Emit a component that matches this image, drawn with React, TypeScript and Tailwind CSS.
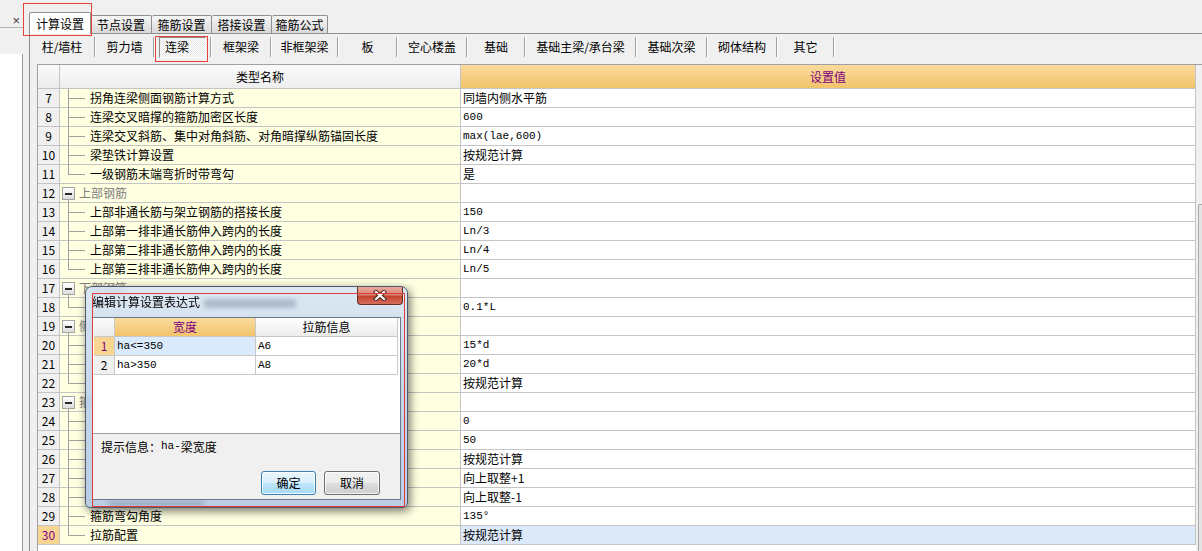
import React from 'react';

type T = 'mid' | 'last' | 'group';
interface Row {
  n: number;
  name: string;
  value?: string;
  t: T;
  sel?: boolean;
}

const rows: Row[] = [
  { n: 7, name: '拐角连梁侧面钢筋计算方式', value: '同墙内侧水平筋', t: 'mid' },
  { n: 8, name: '连梁交叉暗撑的箍筋加密区长度', value: '600', t: 'mid' },
  { n: 9, name: '连梁交叉斜筋、集中对角斜筋、对角暗撑纵筋锚固长度', value: 'max(lae,600)', t: 'mid' },
  { n: 10, name: '梁垫铁计算设置', value: '按规范计算', t: 'mid' },
  { n: 11, name: '一级钢筋末端弯折时带弯勾', value: '是', t: 'last' },
  { n: 12, name: '上部钢筋', t: 'group' },
  { n: 13, name: '上部非通长筋与架立钢筋的搭接长度', value: '150', t: 'mid' },
  { n: 14, name: '上部第一排非通长筋伸入跨内的长度', value: 'Ln/3', t: 'mid' },
  { n: 15, name: '上部第二排非通长筋伸入跨内的长度', value: 'Ln/4', t: 'mid' },
  { n: 16, name: '上部第三排非通长筋伸入跨内的长度', value: 'Ln/5', t: 'last' },
  { n: 17, name: '下部钢筋', t: 'group' },
  { n: 18, name: '', value: '0.1*L', t: 'last' },
  { n: 19, name: '侧面钢筋', t: 'group' },
  { n: 20, name: '', value: '15*d', t: 'mid' },
  { n: 21, name: '', value: '20*d', t: 'mid' },
  { n: 22, name: '', value: '按规范计算', t: 'last' },
  { n: 23, name: '箍筋/拉筋', t: 'group' },
  { n: 24, name: '', value: '0', t: 'mid' },
  { n: 25, name: '', value: '50', t: 'mid' },
  { n: 26, name: '', value: '按规范计算', t: 'mid' },
  { n: 27, name: '', value: '向上取整+1', t: 'mid' },
  { n: 28, name: '', value: '向上取整-1', t: 'mid' },
  { n: 29, name: '箍筋弯勾角度', value: '135°', t: 'mid' },
  { n: 30, name: '拉筋配置', value: '按规范计算', t: 'last', sel: true },
];

const isLatin = (s: string) => /^[\x20-\x7E°]+$/.test(s);

const subTabs: { label: string; w: string; pressed?: boolean }[] = [
  { label: '柱/墙柱', w: 'w-[64px]' },
  { label: '剪力墙', w: 'w-[57px]' },
  { label: '连梁', w: 'w-[55px]', pressed: true },
  { label: '框架梁', w: 'w-[58px]' },
  { label: '非框架梁', w: 'w-[65px]' },
  { label: '板', w: 'w-[57px]' },
  { label: '空心楼盖', w: 'w-[68px]' },
  { label: '基础', w: 'w-[56px]' },
  { label: '基础主梁/承台梁', w: 'w-[109px]' },
  { label: '基础次梁', w: 'w-[69px]' },
  { label: '砌体结构', w: 'w-[68px]' },
  { label: '其它', w: 'w-[55px]' },
];

function ValueText({ v }: { v: string }) {
  if (isLatin(v)) {
    return <span className="font-['Liberation_Mono',monospace] text-[11px] leading-[18px]">{v}</span>;
  }
  return <span className="leading-[18px]">{v}</span>;
}

function NameCell({ r }: { r: Row }) {
  if (r.t === 'group') {
    return (
      <div className="relative w-[401px] h-[19px] shrink-0 bg-[#ffffe1] border-b border-r border-[#c4c4c4] flex items-center pl-[19px]">
        <div className="absolute left-[8px] top-[15px] -bottom-px w-px bg-[#a0a0a0]" />
        <div className="absolute left-[2px] top-[3px] w-[13px] h-[13px] border border-[#a4a4a4] bg-[linear-gradient(180deg,#ffffff,#dcdcdc)] flex items-center justify-center">
          <div className="w-[7px] h-[2px] bg-[#2a2a2a]" />
        </div>
        <span className="leading-[18px] text-[#808080]">{r.name}</span>
      </div>
    );
  }
  return (
    <div className="relative w-[401px] h-[19px] shrink-0 bg-[#ffffe1] border-b border-r border-[#c4c4c4] flex items-center pl-[30px]">
      {r.t === 'last' ? (
        <div className="absolute left-[8px] top-0 h-[10px] w-px bg-[#a0a0a0]" />
      ) : (
        <div className="absolute left-[8px] top-0 -bottom-px w-px bg-[#a0a0a0]" />
      )}
      <div className="absolute left-[8px] top-[9px] w-[17px] h-px bg-[#a0a0a0]" />
      {r.name ? <span className="leading-[18px] whitespace-nowrap">{r.name}</span> : null}
    </div>
  );
}

function CloseX() {
  return (
    <svg width="14" height="11" viewBox="0 0 14 11">
      <path d="M3 2 L11 9 M11 2 L3 9" stroke="#4a2420" strokeWidth="4.2" strokeLinecap="square" />
      <path d="M3 2 L11 9 M11 2 L3 9" stroke="#ffffff" strokeWidth="2.2" strokeLinecap="square" />
    </svg>
  );
}

function Dialog() {
  return (
    <div className="absolute z-30 left-[85px] top-[286px] w-[323px] h-[222px] rounded-t-[7px] rounded-b-[5px] border border-[#4d596a] bg-[linear-gradient(180deg,rgba(214,229,246,0.86),rgba(190,210,235,0.88)_45%,rgba(178,200,228,0.9))] backdrop-blur-[2px] shadow-[2px_3px_10px_rgba(0,0,0,0.55)] flex flex-col">
      <div className="absolute left-[118px] top-[12px] w-[92px] h-[9px] rounded-[3px] bg-[#5d6f85]/35 blur-[2px]" />
      <div className="absolute left-[22px] bottom-[1px] w-[96px] h-[5px] rounded-[3px] bg-[#5d6f85]/35 blur-[2px]" />
      <div className="relative h-[30px] flex items-center pl-[6px] text-[12px] text-black">编辑计算设置表达式</div>
      <div className="relative mx-[6px] h-[183px] border border-[#6c7887] bg-[#f0f0f0] flex flex-col">
        <div className="h-[116px] bg-white border-b border-[#a0a0a0] flex flex-col pl-px">
          <div className="flex h-[19px]">
            <div className="w-[21px] h-[19px] border-r border-b border-[#c8c8c8] bg-[linear-gradient(180deg,#fafafa,#ececec)]" />
            <div className="w-[141px] h-[19px] border-r border-b border-[#c8c8c8] bg-[linear-gradient(180deg,#fadb9c,#f2c46c)] flex items-center justify-center text-[#800080] leading-[18px]">宽度</div>
            <div className="w-[142px] h-[19px] border-r border-b border-[#c8c8c8] bg-[linear-gradient(180deg,#ffffff,#ececec)] flex items-center justify-center leading-[18px]">拉筋信息</div>
          </div>
          <div className="flex h-[19px]">
            <div className="w-[21px] h-[19px] border-r border-b border-[#c8c8c8] bg-[#f9d592] flex items-center justify-center text-[#800080] leading-[18px]">1</div>
            <div className="w-[141px] h-[19px] border-r border-b border-[#c8c8c8] bg-[#dcebfc] flex items-center pl-[2px]">
              <span className="font-['Liberation_Mono',monospace] text-[11px] leading-[18px]">ha&lt;=350</span>
            </div>
            <div className="w-[142px] h-[19px] border-r border-b border-[#c8c8c8] flex items-center pl-[2px]">
              <span className="font-['Liberation_Mono',monospace] text-[11px] leading-[18px]">A6</span>
            </div>
          </div>
          <div className="flex h-[19px]">
            <div className="w-[21px] h-[19px] border-r border-b border-[#c8c8c8] bg-[#f0f0f0] flex items-center justify-center leading-[18px]">2</div>
            <div className="w-[141px] h-[19px] border-r border-b border-[#c8c8c8] flex items-center pl-[2px]">
              <span className="font-['Liberation_Mono',monospace] text-[11px] leading-[18px]">ha&gt;350</span>
            </div>
            <div className="w-[142px] h-[19px] border-r border-b border-[#c8c8c8] flex items-center pl-[2px]">
              <span className="font-['Liberation_Mono',monospace] text-[11px] leading-[18px]">A8</span>
            </div>
          </div>
        </div>
        <div className="pt-[3px] h-[22px] pl-[8px] flex items-center leading-[19px]">
          <span>提示信息：</span>
          <span className="font-['Liberation_Mono',monospace] text-[11px]">ha-</span>
          <span>梁宽度</span>
        </div>
        <div className="mt-[15px] flex justify-end gap-[8px] pr-[20px]">
          <div className="w-[55px] h-[24px] rounded-[3px] border border-[#3c7fb1] bg-[linear-gradient(180deg,#eaf6fd_0%,#d9f0fc_50%,#bee6fd_51%,#a7d9f5_100%)] shadow-[inset_0_0_0_1px_rgba(255,255,255,0.8)] flex items-center justify-center">确定</div>
          <div className="w-[56px] h-[24px] rounded-[3px] border border-[#707070] bg-[linear-gradient(180deg,#f2f2f2_0%,#ebebeb_50%,#dddddd_51%,#cfcfcf_100%)] shadow-[inset_0_0_0_1px_rgba(255,255,255,0.7)] flex items-center justify-center">取消</div>
        </div>
      </div>
      <div className="absolute right-[4px] top-0 w-[46px] h-[18px] rounded-b-[4px] border border-t-0 border-[#6b2d25] bg-[linear-gradient(180deg,#e8aa9e_0%,#d98474_45%,#c2432f_55%,#d56e5b_100%)] flex items-center justify-center">
        <CloseX />
      </div>
      <div className="absolute left-[6px] top-[6px] w-[313px] h-[214px] border border-[#e23b3b] pointer-events-none" />
    </div>
  );
}

export default function App() {
  return (
    <div className="relative w-[1202px] h-[551px] overflow-hidden bg-[#f0f0f0] flex font-['Noto_Sans_CJK_SC','Noto_Sans',sans-serif] text-[12px] text-black">
      <div className="w-[23px] h-full shrink-0 flex flex-col">
        <div className="h-[14px]" />
        <div className="h-[14px] flex items-center justify-end pr-[3px] overflow-hidden border-b border-[#b4b4b4] text-[#404040] leading-none">
          <span className="font-['Liberation_Sans',sans-serif] text-[13px]">×</span>
        </div>
        <div className="h-[26px]" />
        <div className="flex-1 bg-white border-r border-[#9a9a9a]" />
      </div>

      <div className="flex-1 flex flex-col ml-[6px] pt-[12px] min-w-0">
        <div className="flex items-end h-[21px]">
          <div className="relative z-10 w-[62px] h-[22px] -mb-px bg-white border border-b-0 border-[#8e8f8f] rounded-t-[2px] flex items-center justify-center">计算设置</div>
          <div className="w-[61px] h-[18px] border border-b-0 border-l-0 border-[#8e8f8f] rounded-t-[2px] bg-[linear-gradient(180deg,#f6f6f6,#d9d9d9)] flex items-center justify-center">节点设置</div>
          <div className="w-[60px] h-[18px] border border-b-0 border-l-0 border-[#8e8f8f] rounded-t-[2px] bg-[linear-gradient(180deg,#f6f6f6,#d9d9d9)] flex items-center justify-center">箍筋设置</div>
          <div className="w-[60px] h-[18px] border border-b-0 border-l-0 border-[#8e8f8f] rounded-t-[2px] bg-[linear-gradient(180deg,#f6f6f6,#d9d9d9)] flex items-center justify-center">搭接设置</div>
          <div className="w-[56px] h-[18px] border border-b-0 border-l-0 border-[#8e8f8f] rounded-t-[2px] bg-[linear-gradient(180deg,#f6f6f6,#d9d9d9)] flex items-center justify-center">箍筋公式</div>
        </div>

        <div className="flex-1 flex flex-col border-t border-l border-[#8e8f8f] min-h-0">
          <div className="h-[30px] flex items-start pt-[3px] shrink-0">
            {subTabs.map((s) => (
              <React.Fragment key={s.label}>
                <div className={`${s.w} h-[20px] shrink-0 flex items-center justify-center`}>
                  {s.pressed ? (
                    <div className="w-[47px] h-[21px] border border-t-[#8a8a8a] border-l-[#8a8a8a] border-b-white border-r-white bg-[repeating-conic-gradient(#ffffff_0%_25%,#e6e6e6_0%_50%)] bg-[length:2px_2px] flex items-center pl-[5px]">
                      {s.label}
                    </div>
                  ) : (
                    <span>{s.label}</span>
                  )}
                </div>
                <div className="w-[2px] h-[20px] shrink-0 border-l border-r border-l-[#a0a0a0] border-r-white" />
              </React.Fragment>
            ))}
          </div>

          <div className="ml-[7px] flex-1 flex border-t border-l border-[#a0a0a0] bg-white min-h-0 overflow-hidden">
            <div className="w-[1158px] shrink-0 flex flex-col">
              <div className="flex h-[24px] shrink-0">
                <div className="w-[22px] h-[24px] border-r border-b border-[#c4c4c4] bg-[linear-gradient(180deg,#fafafa,#ececec)]" />
                <div className="w-[401px] h-[24px] border-r border-b border-[#c4c4c4] bg-[linear-gradient(180deg,#fafafa,#eeeeee)] flex items-center justify-center">类型名称</div>
                <div className="w-[735px] h-[24px] border-r border-b border-[#c4c4c4] bg-[linear-gradient(180deg,#fadb9c,#f2c46c)] flex items-center justify-center text-[#800080]">设置值</div>
              </div>
              {rows.map((r) => (
                <div key={r.n} className="flex h-[19px] shrink-0">
                  <div
                    className={`w-[22px] h-[19px] shrink-0 border-r border-b border-[#c4c4c4] flex items-center justify-center leading-[18px] ${
                      r.sel ? 'bg-[#f9d592] text-[#800080]' : 'bg-[#f0f0f0]'
                    }`}
                  >
                    {r.n}
                  </div>
                  <NameCell r={r} />
                  <div
                    className={`w-[735px] h-[19px] shrink-0 border-r border-b border-[#c4c4c4] flex items-center pl-[2px] ${
                      r.sel ? 'bg-[#dce9f9]' : 'bg-white'
                    }`}
                  >
                    {r.value ? <ValueText v={r.value} /> : null}
                  </div>
                </div>
              ))}
            </div>
            <div className="flex-1 flex flex-col bg-[#f0f0f0]">
              <div className="h-[139px] shrink-0" />
              <div className="flex-1 ml-[2px] border-l border-t border-[#a8a8a8] rounded-tl-[2px] bg-[#e4e4e4]" />
            </div>
          </div>
        </div>
      </div>

      <div className="absolute z-20 left-[23px] top-[3px] w-[69px] h-[33px] border border-[#e8413d] pointer-events-none" />
      <div className="absolute z-20 left-[155px] top-[36px] w-[53px] h-[26px] border border-[#e8413d] pointer-events-none" />

      <Dialog />
    </div>
  );
}
